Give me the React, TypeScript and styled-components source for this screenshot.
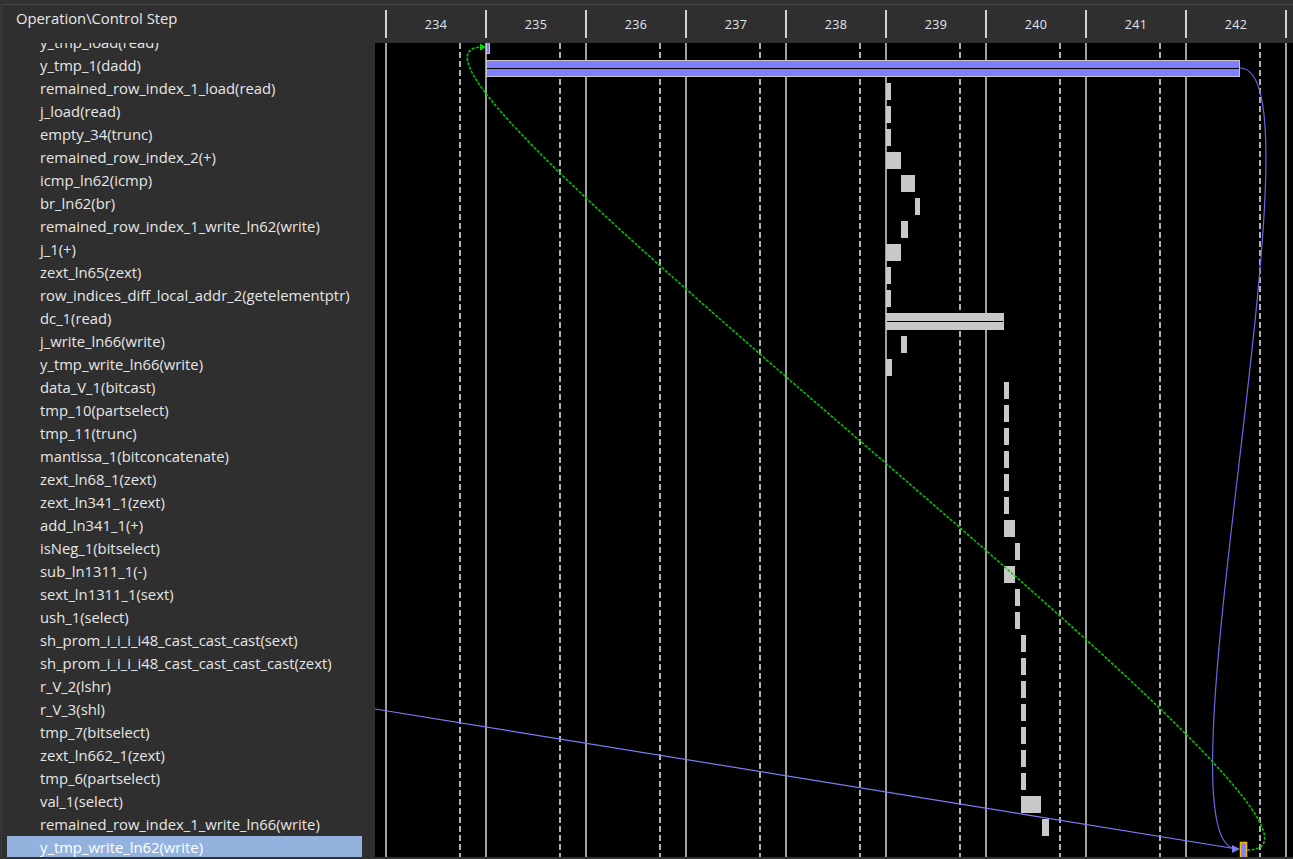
import React from "react";
import styled, { createGlobalStyle } from "styled-components";

const GlobalStyle = createGlobalStyle`
  html, body { margin: 0; padding: 0; background: #2f2f2f; overflow: hidden; }
  #root { width: 1293px; height: 859px; }
`;

const Window = styled.div`
  width: 1293px;
  height: 859px;
  box-sizing: border-box;
  background: #313131;
  padding-top: 4px;
  padding-left: 1px;
  display: flex;
  flex-direction: column;
  font-family: "Open Sans", "Noto Sans", sans-serif;
`;

const Frame = styled.div`
  height: 853px;
  box-sizing: border-box;
  border-top: 1px solid #454545;
  border-left: 1px solid #3d3d3d;
  display: grid;
  grid-template-columns: 373px 918px;
  grid-template-rows: 38px 814px;
  background: #2f2f2f;
`;

const LeftHeader = styled.div`
  padding: 3px 0 0 14px;
  color: #e8e8e8;
  font-size: 14.8px;
  line-height: 20px;
  white-space: nowrap;
`;

const StepHeader = styled.div`
  display: flex;
  align-items: flex-start;
  padding-left: 10px;
`;

const Step = styled.div`
  display: flex;
  width: 100px;
  flex: none;
`;

const Tick = styled.div`
  width: 2px;
  height: 28px;
  margin-top: 5px;
  background: #d2d2d2;
  flex: none;
`;

const StepLabel = styled.div`
  flex: 1;
  text-align: center;
  font-size: 12.5px;
  line-height: 16px;
  padding-top: 12px;
  color: #e2e6ee;
  letter-spacing: 0.4px;
`;

const List = styled.div`
  overflow: hidden;
`;

const ListInner = styled.div`
  display: flex;
  flex-direction: column;
  margin-top: -12px;
`;

const Row = styled.div<{ $selected?: boolean }>`
  height: 23px;
  flex: none;
  display: flex;
  align-items: center;
  margin-left: 5px;
  width: 355px;
  box-sizing: border-box;
  padding: 0 0 2px 33px;
  font-size: 14.8px;
  color: ${(p) => (p.$selected ? "#ffffff" : "#e6e6e6")};
  background: ${(p) => (p.$selected ? "#93b2de" : "transparent")};
  white-space: nowrap;
`;

const ChartArea = styled.div`
  background: #000;
  overflow: hidden;
  display: flex;
`;

const rows = [
  "y_tmp_load(read)",
  "y_tmp_1(dadd)",
  "remained_row_index_1_load(read)",
  "j_load(read)",
  "empty_34(trunc)",
  "remained_row_index_2(+)",
  "icmp_ln62(icmp)",
  "br_ln62(br)",
  "remained_row_index_1_write_ln62(write)",
  "j_1(+)",
  "zext_ln65(zext)",
  "row_indices_diff_local_addr_2(getelementptr)",
  "dc_1(read)",
  "j_write_ln66(write)",
  "y_tmp_write_ln66(write)",
  "data_V_1(bitcast)",
  "tmp_10(partselect)",
  "tmp_11(trunc)",
  "mantissa_1(bitconcatenate)",
  "zext_ln68_1(zext)",
  "zext_ln341_1(zext)",
  "add_ln341_1(+)",
  "isNeg_1(bitselect)",
  "sub_ln1311_1(-)",
  "sext_ln1311_1(sext)",
  "ush_1(select)",
  "sh_prom_i_i_i_i48_cast_cast_cast(sext)",
  "sh_prom_i_i_i_i48_cast_cast_cast_cast(zext)",
  "r_V_2(lshr)",
  "r_V_3(shl)",
  "tmp_7(bitselect)",
  "zext_ln662_1(zext)",
  "tmp_6(partselect)",
  "val_1(select)",
  "remained_row_index_1_write_ln66(write)",
  "y_tmp_write_ln62(write)",
];

type Bar = { row: number; x1: number; x2: number; kind: "gray" | "purple" | "sel"; mid?: boolean };

const bars: Bar[] = [
  { row: 0, x1: 111, x2: 115, kind: "purple" },
  { row: 1, x1: 111, x2: 865, kind: "purple", mid: true },
  { row: 2, x1: 511, x2: 516, kind: "gray" },
  { row: 3, x1: 511, x2: 516, kind: "gray" },
  { row: 4, x1: 511, x2: 516, kind: "gray" },
  { row: 5, x1: 511, x2: 526, kind: "gray" },
  { row: 6, x1: 526, x2: 540, kind: "gray" },
  { row: 7, x1: 540, x2: 545, kind: "gray" },
  { row: 8, x1: 526, x2: 533, kind: "gray" },
  { row: 9, x1: 511, x2: 526, kind: "gray" },
  { row: 10, x1: 511, x2: 516, kind: "gray" },
  { row: 11, x1: 511, x2: 516, kind: "gray" },
  { row: 12, x1: 511, x2: 629, kind: "gray", mid: true },
  { row: 13, x1: 526, x2: 532, kind: "gray" },
  { row: 14, x1: 511, x2: 517, kind: "gray" },
  { row: 15, x1: 629, x2: 634, kind: "gray" },
  { row: 16, x1: 629, x2: 634, kind: "gray" },
  { row: 17, x1: 629, x2: 634, kind: "gray" },
  { row: 18, x1: 629, x2: 634, kind: "gray" },
  { row: 19, x1: 629, x2: 634, kind: "gray" },
  { row: 20, x1: 629, x2: 634, kind: "gray" },
  { row: 21, x1: 629, x2: 640, kind: "gray" },
  { row: 22, x1: 640, x2: 645, kind: "gray" },
  { row: 23, x1: 629, x2: 640, kind: "gray" },
  { row: 24, x1: 640, x2: 645, kind: "gray" },
  { row: 25, x1: 640, x2: 645, kind: "gray" },
  { row: 26, x1: 646, x2: 651, kind: "gray" },
  { row: 27, x1: 646, x2: 651, kind: "gray" },
  { row: 28, x1: 646, x2: 651, kind: "gray" },
  { row: 29, x1: 646, x2: 651, kind: "gray" },
  { row: 30, x1: 646, x2: 651, kind: "gray" },
  { row: 31, x1: 646, x2: 651, kind: "gray" },
  { row: 32, x1: 646, x2: 651, kind: "gray" },
  { row: 33, x1: 646, x2: 666, kind: "gray" },
  { row: 34, x1: 667, x2: 674, kind: "gray" },
  { row: 35, x1: 865, x2: 872, kind: "sel" },
];

const steps = [234, 235, 236, 237, 238, 239, 240, 241, 242];

const barTop = (row: number) => -6 + 23 * row;

function Chart() {
  const solid = Array.from({ length: 10 }, (_, k) => 10 + 100 * k);
  const dashed = Array.from({ length: 9 }, (_, k) => 85 + 100 * k);
  return (
    <svg width={918} height={814} viewBox="0 0 918 814">
      {solid.map((x) => (
        <rect key={"s" + x} x={x} y={0} width={2} height={814} fill="#9e9e9e" />
      ))}
      {dashed.map((x) => (
        <line key={"d" + x} x1={x} y1={0} x2={x} y2={814} stroke="#b2b2b2" strokeWidth={2} strokeDasharray="6 3" />
      ))}
      {bars.map((b) => {
        const y = barTop(b.row);
        if (b.kind === "gray") {
          return (
            <g key={b.row}>
              <rect x={b.x1} y={y} width={b.x2 - b.x1} height={17} fill="#c8c8c8" />
              {b.mid && <line x1={b.x1 + 1} x2={b.x2 - 1} y1={y + 8.5} y2={y + 8.5} stroke="#000" strokeWidth={1} />}
            </g>
          );
        }
        return (
          <g key={b.row}>
            <rect
              x={b.x1 + 0.5}
              y={y + 0.5}
              width={b.x2 - b.x1 - 1}
              height={16}
              fill="#8080ff"
              stroke={b.kind === "sel" ? "#f5b800" : "#c4c4c4"}
              strokeWidth={b.kind === "sel" ? 1.5 : 1}
            />
            {b.mid && <line x1={b.x1 + 1} x2={b.x2 - 1} y1={y + 8.5} y2={y + 8.5} stroke="#000" strokeWidth={1.2} />}
          </g>
        );
      })}
      <line x1={0} y1={666} x2={862} y2={806} stroke="#7c7cf6" strokeWidth={1.2} />
      <path d="M865 25 C955 25, 775 806, 862 806" fill="none" stroke="#6868ea" strokeWidth={1.2} />
      <polygon points="857,802 865,806 857,810" fill="#7c7cf6" />
      <path
        d="M872 807 C1040 807, -50 4, 108 4"
        fill="none"
        stroke="#00c400"
        strokeWidth={1.6}
        strokeDasharray="3 1.5"
      />
      <polygon points="105,0.5 111,4 105,7.5" fill="#00e000" />
    </svg>
  );
}

export default function App() {
  return (
    <>
      <GlobalStyle />
      <Window>
        <Frame>
          <LeftHeader>Operation\Control Step</LeftHeader>
          <StepHeader>
            {steps.map((s) => (
              <Step key={s}>
                <Tick />
                <StepLabel>{s}</StepLabel>
              </Step>
            ))}
            <Tick />
          </StepHeader>
          <List>
            <ListInner>
              {rows.map((r, i) => (
                <Row key={r} $selected={i === rows.length - 1}>
                  {r}
                </Row>
              ))}
            </ListInner>
          </List>
          <ChartArea>
            <Chart />
          </ChartArea>
        </Frame>
      </Window>
    </>
  );
}
